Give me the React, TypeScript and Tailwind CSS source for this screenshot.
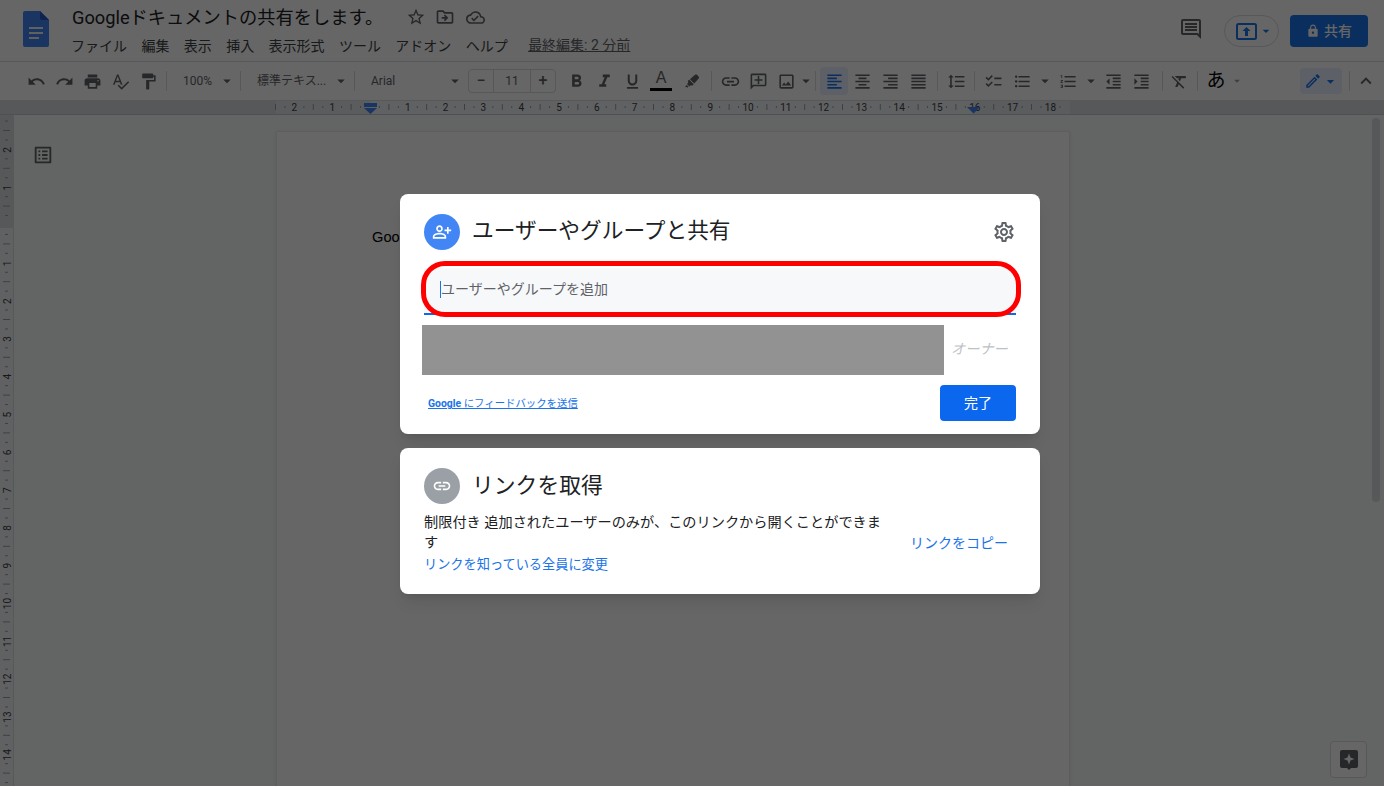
import type { ReactNode } from "react";
import { FaHighlighter } from "react-icons/fa";
import {
  MdArrowDropDown,
  MdChecklist,
  MdExpandLess,
  MdFormatAlignCenter,
  MdFormatAlignJustify,
  MdFormatAlignLeft,
  MdFormatAlignRight,
  MdFormatBold,
  MdFormatClear,
  MdFormatIndentDecrease,
  MdFormatIndentIncrease,
  MdFormatItalic,
  MdFormatLineSpacing,
  MdFormatListBulleted,
  MdFormatListNumbered,
  MdFormatPaint,
  MdFormatUnderlined,
  MdLink,
  MdLock,
  MdOutlineAddComment,
  MdOutlineCloudDone,
  MdOutlineComment,
  MdOutlineDriveFileMove,
  MdOutlineEdit,
  MdOutlineImage,
  MdOutlineListAlt,
  MdOutlinePersonAddAlt,
  MdOutlineSettings,
  MdPrint,
  MdRedo,
  MdSpellcheck,
  MdStarBorder,
  MdUndo,
} from "react-icons/md";

const menus = ["ファイル", "編集", "表示", "挿入", "表示形式", "ツール", "アドオン", "ヘルプ"];
const INCH = 37.8;

function Btn({ children, active }: { children: ReactNode; active?: boolean }) {
  return (
    <div className={`w-7 h-7 shrink-0 flex items-center justify-center rounded-sm text-[19px] ${active ? "bg-[#e8f0fe] text-[#1a73e8]" : "text-[#5f6368]"}`}>
      {children}
    </div>
  );
}

function Sep() {
  return <div className="w-px h-5 bg-[#dadce0] mx-1 shrink-0" />;
}

function Caret() {
  return <MdArrowDropDown className="text-[18px] text-[#5f6368] shrink-0" />;
}

function Select({ label, width }: { label: string; width: string }) {
  return (
    <div className={`${width} h-7 shrink-0 flex items-center justify-between pl-[12px] text-[12px] text-[#5f6368]`}>
      <span>{label}</span>
      <Caret />
    </div>
  );
}

function Toolbar() {
  return (
    <div className="h-[39px] shrink-0 flex items-center pl-[22px] pr-[6px] bg-white border-b border-[#dadce0]">
      <Btn><MdUndo /></Btn>
      <Btn><MdRedo /></Btn>
      <Btn><MdPrint /></Btn>
      <Btn><MdSpellcheck /></Btn>
      <Btn><MdFormatPaint /></Btn>
      <Sep />
      <Select label="100%" width="w-[65px]" />
      <Sep />
      <Select label="標準テキス..." width="w-[105px]" />
      <Sep />
      <Select label="Arial" width="w-[105px]" />
      <div className="ml-[4px] w-[88px] h-[24px] shrink-0 flex items-center border border-[#dadce0] rounded-sm text-[#5f6368]">
        <div className="w-6 flex justify-center text-[16px] font-medium">−</div>
        <div className="flex-1 h-full flex items-center justify-center border-x border-[#dadce0] text-[12px] text-[#5f6368]">11</div>
        <div className="w-6 flex justify-center text-[16px] font-medium">+</div>
      </div>
      <div className="ml-[6px] flex">
        <Btn><MdFormatBold className="text-[21px]" /></Btn>
        <Btn><MdFormatItalic className="text-[21px]" /></Btn>
        <Btn><MdFormatUnderlined /></Btn>
        <div className="ml-px w-7 h-7 shrink-0 flex flex-col items-center text-[#5f6368]">
          <span className="text-[16px] leading-[21px] font-['Liberation_Sans',sans-serif]">A</span>
          <div className="w-[22px] h-[3px] bg-black" />
        </div>
        <div className="ml-[3px]"><Btn><FaHighlighter className="text-[14px]" /></Btn></div>
      </div>
      <div className="ml-px"><Sep /></div>
      <Btn><MdLink className="text-[21px]" /></Btn>
      <Btn><MdOutlineAddComment className="-scale-x-100" /></Btn>
      <Btn><MdOutlineImage /></Btn>
      <div className="-ml-[3px] w-[14px]"><Caret /></div>
      <Sep />
      <Btn active><MdFormatAlignLeft /></Btn>
      <Btn><MdFormatAlignCenter /></Btn>
      <Btn><MdFormatAlignRight /></Btn>
      <Btn><MdFormatAlignJustify /></Btn>
      <div className="ml-px"><Sep /></div>
      <Btn><MdFormatLineSpacing /></Btn>
      <Sep />
      <Btn><MdChecklist /></Btn>
      <div className="ml-px"><Btn><MdFormatListBulleted /></Btn></div>
      <div className="w-[18px]"><Caret /></div>
      <Btn><MdFormatListNumbered /></Btn>
      <div className="w-[17px]"><Caret /></div>
      <Btn><MdFormatIndentDecrease /></Btn>
      <Btn><MdFormatIndentIncrease /></Btn>
      <div className="ml-[3px] -mr-[2px]"><Sep /></div>
      <Btn><MdFormatClear /></Btn>
      <Sep />
      <div className="w-7 h-7 shrink-0 flex items-center justify-center text-[19px] text-black">あ</div>
      <MdArrowDropDown className="text-[14px] text-[#9aa0a6]" />
      <div className="ml-auto w-[42px] h-[26px] flex items-center justify-center bg-[#e8f0fe] rounded-sm text-[#1a73e8]">
        <MdOutlineEdit className="text-[18px]" />
        <MdArrowDropDown className="text-[17px]" />
      </div>
      <div className="ml-[3px]"><Sep /></div>
      <div className="w-[24px] flex items-center justify-center text-[22px] text-[#5f6368]"><MdExpandLess /></div>
    </div>
  );
}

function HorizontalRuler() {
  const nums = [2, 1, 0, 1, 2, 3, 4, 5, 6, 7, 8, 9, 10, 11, 12, 13, 14, 15, 16, 17, 18];
  return (
    <div className="h-[14px] shrink-0 bg-[#dadce0] border-b border-[#c4c7cb]">
      <svg width="1384" height="13" className="block">
        <rect x="370" y="0" width="603" height="13" fill="#f1f3f4" />
        <rect x="276" y="0" width="94" height="13" fill="#e3e5e8" />
        <rect x="973" y="0" width="97" height="13" fill="#e3e5e8" />
        {nums.map((n, i) => {
          const x = 294.4 + i * INCH;
          return (
            <g key={i} stroke="#9aa0a6" strokeWidth="1">
              <line x1={x - 18.9} x2={x - 18.9} y1="3" y2="9" />
              <line x1={x - 9.45} x2={x - 9.45} y1="5" y2="7" />
              <line x1={x + 9.45} x2={x + 9.45} y1="5" y2="7" />
              {n !== 0 && (
                <text x={x} y="10" fontSize="10" textAnchor="middle" fill="#3c4043" stroke="none" fontFamily="Roboto, sans-serif">{n}</text>
              )}
            </g>
          );
        })}
        <rect x="364" y="2" width="13" height="4" fill="#4285f4" />
        <path d="M364 7h13l-6.500 6z" fill="#4285f4" />
        <path d="M967 6h13l-6.500 6.500z" fill="#4285f4" />
      </svg>
    </div>
  );
}

function VerticalRuler() {
  const nums = [-2, -1, 1, 2, 3, 4, 5, 6, 7, 8, 9, 10, 11, 12, 13, 14];
  return (
    <div className="w-[14px] h-full shrink-0 bg-[#f1f3f4] border-r border-[#dadce0]">
      <svg width="13" height="671" className="block">
        <rect x="0" y="0" width="13" height="113" fill="#dadce0" />
        {Array.from({ length: 19 }, (_, i) => {
          const y = -3.4 + i * INCH;
          return (
            <g key={i} stroke="#9aa0a6" strokeWidth="1">
              <line y1={y + 18.9} y2={y + 18.9} x1="3" x2="10" />
              <line y1={y + 9.45} y2={y + 9.45} x1="5" x2="8" />
              <line y1={y + 28.35} y2={y + 28.35} x1="5" x2="8" />
            </g>
          );
        })}
        {nums.map((n) => {
          const y = 110.6 + n * INCH;
          return (
            <text key={n} transform={`translate(11 ${y}) rotate(-90)`} fontSize="10" textAnchor="middle" fill="#3c4043" fontFamily="Roboto, sans-serif">{Math.abs(n)}</text>
          );
        })}
      </svg>
    </div>
  );
}

function Canvas() {
  return (
    <div className="flex-1 min-h-0 flex bg-[#f8f9fa] overflow-hidden">
      <VerticalRuler />
      <div className="w-[262px] shrink-0 pl-[18px] pt-[29px]">
        <MdOutlineListAlt className="text-[22px] text-[#5f6368]" />
      </div>
      <div className="w-[794px] h-[800px] shrink-0 mt-4 bg-white border border-[#e8eaed] pl-[95px] pt-[94px] shadow-sm">
        <div className="text-[14.67px] text-black font-['Liberation_Sans',sans-serif]">Goo</div>
      </div>
      <div className="flex-1 flex justify-end pr-[4px] pt-[3px]">
        <div className="w-2 h-[384px] rounded bg-[#dadce0]" />
      </div>
    </div>
  );
}

function Header() {
  return (
    <div className="h-[62px] shrink-0 flex bg-white border-b border-[#dadce0] pl-[23px] pr-[16px]">
      <svg width="26" height="36" viewBox="0 0 26 36" className="mt-[11px] shrink-0">
        <path d="M2 0h15l9 9v25a2 2 0 0 1-2 2H2a2 2 0 0 1-2-2V2a2 2 0 0 1 2-2z" fill="#4285f4" />
        <path d="M17 0l9 9h-7a2 2 0 0 1-2-2z" fill="#2a56c6" />
        <path d="M6 16h14v2H6zM6 21h14v2H6zM6 26h10v2H6z" fill="#f1f1f1" />
      </svg>
      <div className="ml-[22px] flex flex-col">
        <div className="mt-[6px] h-[24px] flex items-center">
          <span className="ml-px text-[18.25px] text-[#202124] whitespace-nowrap w-[322px]">Googleドキュメントの共有をします。</span>
          <div className="flex items-center gap-[9px] text-[20px] text-[#5f6368] ml-[12px] -mt-[2px]">
            <MdStarBorder />
            <MdOutlineDriveFileMove />
            <MdOutlineCloudDone className="ml-[2px] text-[19px]" />
          </div>
        </div>
        <div className="mt-[6px] flex items-center gap-[14.4px] text-[14px] text-[#3c4043] whitespace-nowrap">
          {menus.map((m) => (
            <span key={m}>{m}</span>
          ))}
          <span className="ml-[6px] -mt-[3px] underline text-[#5f6368]">最終編集: 2 分前</span>
        </div>
      </div>
      <div className="ml-auto flex items-start">
        <MdOutlineComment className="mt-[17px] text-[24px] text-[#5f6368]" />
        <div className="ml-[21px] mt-[15px] w-[55px] h-[32px] rounded-full border border-[#dadce0] flex items-center pl-[11px]">
          <svg width="21" height="17" viewBox="0 0 21 17">
            <rect x="1" y="1" width="19" height="15" rx="1.500" fill="none" stroke="#1a73e8" strokeWidth="2" />
            <path d="M10.500 4l4 4H12v5H9V8H6.500z" fill="#1a73e8" />
          </svg>
          <MdArrowDropDown className="text-[16px] text-[#1a73e8] ml-px" />
        </div>
        <div className="ml-[11px] mt-[15px] w-[78px] h-[32px] rounded bg-[#1a73e8] flex items-center justify-center gap-1 text-[14px] font-medium text-white">
          <MdLock className="text-[14px]" />
          <span>共有</span>
        </div>
      </div>
    </div>
  );
}

function ShareDialog() {
  return (
    <div className="w-[640px] h-[240px] bg-white rounded-lg shadow-lg pt-5 flex flex-col">
      <div className="flex items-center pl-6 pr-[24px]">
        <div className="w-9 h-9 rounded-full bg-[#4285f4] flex items-center justify-center text-white text-[20px]">
          <MdOutlinePersonAddAlt />
        </div>
        <div className="ml-3 pb-[2px] text-[21.7px] text-[#202124]">ユーザーやグループと共有</div>
        <MdOutlineSettings className="ml-auto text-[24px] text-[#5f6368]" />
      </div>
      <div className="ml-6 mt-[18px] w-[592px] h-[47px] bg-[#f7f8fa] border-b-2 border-[#1268ea] flex items-center pl-4 pb-[3px] text-[14px] text-[#5f6368]">
        <div className="w-px h-[17px] bg-[#1a73e8]" />
        <span>ユーザーやグループを追加</span>
      </div>
      <div className="mt-[10px] ml-[22px] flex">
        <div className="w-[522px] h-[50px] bg-[#929292]" />
        <div className="ml-[7px] self-center text-[14.2px] italic text-[#bdc1c6]">オーナー</div>
      </div>
      <div className="mt-[10px] pl-7 pr-6 flex items-center justify-between">
        <a className="pt-[2px] text-[10.4px] text-[#1a73e8] underline whitespace-nowrap">
          <span className="font-bold">Google</span> にフィードバックを送信
        </a>
        <div className="w-[76px] h-9 rounded bg-[#0b68ee] flex items-center justify-center text-[14px] text-white">完了</div>
      </div>
    </div>
  );
}

function LinkDialog() {
  return (
    <div className="w-[640px] h-[146px] bg-white rounded-lg shadow-lg pt-5 pl-6">
      <div className="flex items-center">
        <div className="w-9 h-9 rounded-full bg-[#9aa0a6] flex items-center justify-center text-white text-[20px]">
          <MdLink />
        </div>
        <div className="ml-3 text-[21.8px] text-[#202124]">リンクを取得</div>
      </div>
      <div className="mt-[8px] flex items-center">
        <div className="w-[462px]">
          <div className="text-[14.2px] leading-5 text-[#202124]">制限付き 追加されたユーザーのみが、このリンクから開くことができます</div>
          <div className="mt-[3px] text-[13.2px] leading-5 text-[#1a73e8]">リンクを知っている全員に変更</div>
        </div>
        <div className="ml-[24px] text-[14px] text-[#1a73e8] whitespace-nowrap">リンクをコピー</div>
      </div>
    </div>
  );
}

export default function App() {
  return (
    <div className="relative w-[1384px] h-[786px] overflow-hidden flex flex-col bg-white font-[Roboto,'Noto_Sans_CJK_JP',sans-serif]">
      <Header />
      <Toolbar />
      <HorizontalRuler />
      <Canvas />

      <div className="absolute right-[17px] bottom-[8px] w-[37px] h-[37px] rounded bg-white border border-[#dadce0] flex items-center justify-center">
        <svg width="18" height="20" viewBox="0 0 18 20">
          <path d="M2 0h14a2 2 0 0 1 2 2v14a2 2 0 0 1-2 2h-5l-2 2-2-2H2a2 2 0 0 1-2-2V2a2 2 0 0 1 2-2z" fill="#5f6368" />
          <path d="M9 3.500l1.500 4 4 1.500-4 1.500-1.500 4-1.500-4-4-1.500 4-1.500z" fill="#fff" />
        </svg>
      </div>

      <div className="absolute inset-0 bg-black/60" />

      <div className="absolute top-[194px] left-[400px] flex flex-col gap-[14px]">
        <ShareDialog />
        <LinkDialog />
      </div>
      <div className="absolute left-[421px] top-[261px] w-[600px] h-[56px] rounded-[24px] border-[5px] border-[#ff0000]" />
    </div>
  );
}
